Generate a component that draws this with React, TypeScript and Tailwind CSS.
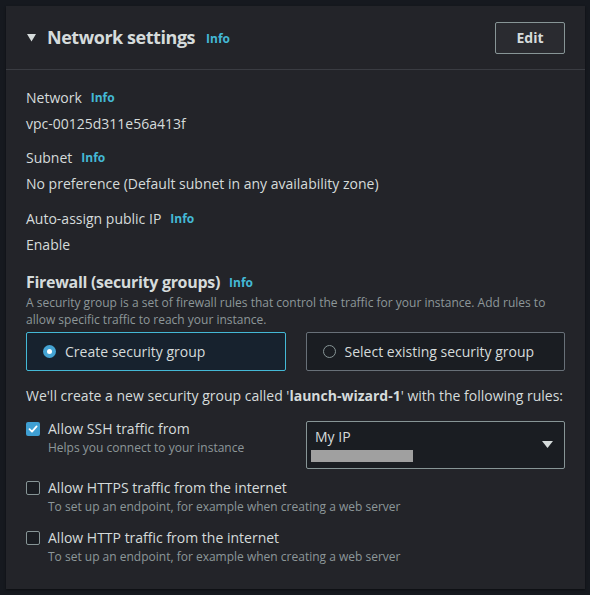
import React from "react";

const Info = () => (
  <span className="ml-[9px] text-[12px] font-bold text-[#44b9d6]">Info</span>
);

function CheckRow({
  checked,
  title,
  desc,
}: {
  checked?: boolean;
  title: string;
  desc: string;
}) {
  return (
    <div className="flex items-start">
      <div
        className={
          checked
            ? "mt-[3px] flex h-[14px] w-[14px] shrink-0 items-center justify-center rounded-[2px] bg-[#3f9fd2]"
            : "mt-[3px] h-[14px] w-[14px] shrink-0 rounded-[2px] border border-[#879596] bg-[#1a1d22]"
        }
      >
        {checked && (
          <svg width="10" height="10" viewBox="0 0 10 10">
            <path d="M1.5 5.2 L4 7.6 L8.6 2.4" fill="none" stroke="#fff" strokeWidth="1.8" strokeLinecap="round" strokeLinejoin="round" />
          </svg>
        )}
      </div>
      <div className="ml-[8px]">
        <div className="text-[14px] leading-[20px] text-[#d5dbdb]">{title}</div>
        <div className="text-[12px] leading-[18px] text-[#8d9799]">{desc}</div>
      </div>
    </div>
  );
}

export default function App() {
  return (
    <div
      className="min-h-[595px] w-[590px] bg-[#16191f] pt-[6px] pl-[6px]"
      style={{ fontFamily: '"Open Sans", "Noto Sans", sans-serif' }}
    >
      <div className="w-[579px] h-[583px] bg-[#232429] shadow-[0_1px_2px_rgba(0,0,0,0.5)]">
        {/* header */}
        <div className="flex h-[64px] items-center justify-between border-b border-[#3a3c42] pl-[21px] pr-[20px]">
          <div className="flex items-center">
            <svg width="9" height="8" viewBox="0 0 9 8" className="mr-[11px] mt-[1px]">
              <path d="M0 0 H9 L4.5 7.5 Z" fill="#d5dbdb" />
            </svg>
            <span className="text-[18px] font-bold tracking-[-0.45px] text-[#d5dbdb]">Network settings</span>
            <span className="ml-[11px] mt-[2px] text-[12px] font-bold text-[#44b9d6]">Info</span>
          </div>
          <button className="h-[32px] w-[70px] rounded-[2px] border border-[#879596] bg-[#2a2b30] text-[14px] font-bold text-[#d5dbdb]">
            Edit
          </button>
        </div>

        {/* body */}
        <div className="px-[20px] pt-[18px]">
          <div className="flex items-center text-[14px] leading-[20px] text-[#d5dbdb]">
            Network
            <Info />
          </div>
          <div className="mt-[6px] text-[14px] leading-[20px] text-[#d5dbdb]">vpc-00125d311e56a413f</div>

          <div className="mt-[14px] flex items-center text-[14px] leading-[20px] text-[#d5dbdb]">
            Subnet
            <Info />
          </div>
          <div className="mt-[6px] text-[14px] leading-[20px] text-[#d5dbdb]">
            No preference (Default subnet in any availability zone)
          </div>

          <div className="mt-[15px] flex items-center text-[14px] leading-[20px] text-[#d5dbdb]">
            Auto-assign public IP
            <Info />
          </div>
          <div className="mt-[6px] text-[14px] leading-[20px] text-[#d5dbdb]">Enable</div>

          <div className="mt-[15px] flex items-center text-[16px] font-bold leading-[22px] tracking-[-0.3px] text-[#d5dbdb]">
            Firewall (security groups)
            <span className="ml-[9px] mt-[2px] text-[12px] font-bold tracking-normal text-[#44b9d6]">Info</span>
          </div>
          <div className="mt-[0px] text-[12px] leading-[17px] text-[#8d9799]">
            A security group is a set of firewall rules that control the traffic for your instance. Add rules to
            allow specific traffic to reach your instance.
          </div>

          <div className="mt-[4px] grid grid-cols-2 gap-[20px]">
            <div className="flex h-[39px] items-center rounded-[2px] border border-[#44b9d6] bg-[#17222e] pl-[16px]">
              <span className="flex h-[13px] w-[13px] items-center justify-center rounded-full bg-[#44a4d4]">
                <span className="h-[5px] w-[5px] rounded-full bg-white" />
              </span>
              <span className="ml-[9px] text-[14px] text-[#d5dbdb]">Create security group</span>
            </div>
            <div className="flex h-[39px] items-center rounded-[2px] border border-[#687078] bg-[#1a1d22] pl-[16px]">
              <span className="h-[13px] w-[13px] rounded-full border border-[#879596]" />
              <span className="ml-[9px] text-[14px] text-[#d5dbdb]">Select existing security group</span>
            </div>
          </div>

          <div className="mt-[15px] text-[14px] leading-[20px] text-[#d5dbdb]">
            We'll create a new security group called '<span className="font-bold">launch-wizard-1</span>' with the following rules:
          </div>

          <div className="mt-[15px] grid grid-cols-[1fr_259px] gap-[20px]">
            <div className="mt-[-2px]">
              <CheckRow checked title="Allow SSH traffic from" desc="Helps you connect to your instance" />
            </div>
            <div className="relative h-[48px] rounded-[2px] border border-[#879596] bg-[#1a1d22] pl-[8px] pt-[5px]">
              <div className="text-[14px] leading-[20px] text-[#d5dbdb]">My IP</div>
              <div className="ml-[-4px] mt-[3px] h-[12px] w-[102px] bg-[#a0a0a0]" />
              <svg width="11" height="8" viewBox="0 0 11 8" className="absolute right-[11px] top-[19px]">
                <path d="M0 0 H11 L5.5 7 Z" fill="#d5dbdb" />
              </svg>
            </div>
          </div>

          <div className="mt-[9px]">
            <CheckRow title="Allow HTTPS traffic from the internet" desc="To set up an endpoint, for example when creating a web server" />
          </div>
          <div className="mt-[12px]">
            <CheckRow title="Allow HTTP traffic from the internet" desc="To set up an endpoint, for example when creating a web server" />
          </div>
        </div>
      </div>
    </div>
  );
}
